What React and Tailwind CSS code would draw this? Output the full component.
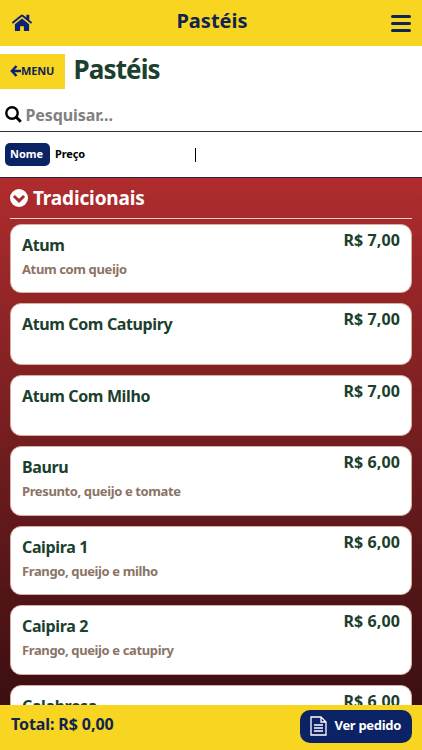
const items = [
  { name: "Atum", description: "Atum com queijo", price: "R$ 7,00" },
  { name: "Atum Com Catupiry", price: "R$ 7,00" },
  { name: "Atum Com Milho", price: "R$ 7,00" },
  { name: "Bauru", description: "Presunto, queijo e tomate", price: "R$ 6,00" },
  { name: "Caipira 1", description: "Frango, queijo e milho", price: "R$ 6,00" },
  { name: "Caipira 2", description: "Frango, queijo e catupiry", price: "R$ 6,00" },
  { name: "Calabresa", price: "R$ 6,00" },
];

function HomeIcon() {
  return (
    <svg width="22" height="18" viewBox="0 0 21 18" fill="#0b2277">
      <path d="M10.5 4.6 3.4 10.300v6.100q0 .7.7.7h4.500v-4.800h3.800v4.800h4.500q.7 0 .7-.7v-6.100z" />
      <path d="M20.700 8.300 17.800 5.900V.8h-2.900v2.700L11.700.9Q10.500 0 9.300.9L.3 8.300l1.200 1.500 9-7.300 9 7.300z" />
    </svg>
  );
}

function ArrowIcon() {
  return (
    <svg width="11" height="12" viewBox="0 0 11 12" fill="none" stroke="#0b2277" strokeWidth="2.500">
      <path d="M6.500 1 1.900 6l4.600 5M2 6h9" />
    </svg>
  );
}

function SearchIcon() {
  return (
    <svg width="17" height="17" viewBox="0 0 17 17" fill="none" stroke="#000" strokeWidth="2.400">
      <circle cx="7" cy="7" r="5.700" />
      <path d="m11 11 4.800 4.800" strokeWidth="2.900" />
    </svg>
  );
}

function ChevronIcon() {
  return (
    <svg width="18" height="18" viewBox="0 0 18 18">
      <circle cx="9" cy="9" r="9" fill="#fff" />
      <path d="m3.900 7 5.100 4.900L14.100 7" fill="none" stroke="#a92b2d" strokeWidth="2.900" />
    </svg>
  );
}

function ItemCard({ item }) {
  return (
    <li
      className={`flex shrink-0 justify-between rounded-[11px] border border-[#d5b0a0] bg-white px-[11px] ${
        item.description ? "h-[69.3px]" : "h-[61.2px]"
      }`}
    >
      <div className="pt-[8px]">
        <h3 className="text-[16px] leading-6 tracking-[-0.37px] text-[#1b402d]">{item.name}</h3>
        {item.description && (
          <p className="text-[13px] leading-6 tracking-[-0.38px] text-[#8b7365]">
            {item.description}
          </p>
        )}
      </div>
      <span className="pt-[3px] text-[16px] leading-6 tracking-[0.1px] text-[#1b402d]">
        {item.price}
      </span>
    </li>
  );
}

export default function App() {
  return (
    <div className="flex h-[750px] w-full flex-col overflow-hidden bg-white font-['Noto_Sans',sans-serif] font-bold">
      <header className="flex h-[46px] shrink-0 items-center justify-between bg-[#f8d521] px-[11px] text-[#0f244f]">
        <HomeIcon />
        <h1 className="pb-[5px] text-[20px] leading-6">Pastéis</h1>
        <div className="flex w-5 flex-col gap-[4px] pt-px">
          <i className="h-[3px] rounded-sm bg-[#0f244f]" />
          <i className="h-[3px] rounded-sm bg-[#0f244f]" />
          <i className="h-[3px] rounded-sm bg-[#0f244f]" />
        </div>
      </header>

      <div className="flex h-[52px] shrink-0 pt-2">
        <button className="flex h-[35px] w-[65px] items-center bg-[#f8d521] pb-px pl-[10px] text-[11px] tracking-[-0.2px] text-[#0f244f]">
          <ArrowIcon />
          MENU
        </button>
        <h2 className="pl-[8.5px] text-[26px] leading-[30px] tracking-[-0.88px] text-[#1b402d]">
          Pastéis
        </h2>
      </div>

      <div className="flex h-[34px] shrink-0 items-center gap-[3.500px] border-b border-[#333] pl-[5px]">
        <SearchIcon />
        <input
          className="w-80 text-[16px] tracking-[-0.1px] outline-none placeholder:text-[#808080]"
          placeholder="Pesquisar..."
        />
      </div>

      <div className="flex h-[46px] shrink-0 items-center border-b border-[#2c2438] pl-[5px] text-[11px] text-black">
        <button className="h-[23px] w-[45px] rounded-[5px] bg-[#0b2265] pr-[2px] pb-px text-white">
          Nome
        </button>
        <button className="ml-[5px] w-[138px] pb-px text-left tracking-[-0.1px]">Preço</button>
        <i className="ml-[2px] h-[14px] w-px bg-black" />
      </div>

      <main className="min-h-0 flex-1 overflow-hidden bg-linear-to-b from-[#b02c2e] to-[#3b0f11] px-[10px]">
        <div className="flex h-[40.5px] items-center gap-[5px] border-b border-[#f0cfcf] pt-px text-white">
          <ChevronIcon />
          <h2 className="text-[19px] leading-6 tracking-[-0.15px]">Tradicionais</h2>
        </div>
        <ul className="mt-[5.5px] flex flex-col gap-[10.2px]">
          {items.map((item) => (
            <ItemCard key={item.name} item={item} />
          ))}
        </ul>
      </main>

      <footer className="flex h-[45px] shrink-0 justify-between bg-[#f8d521] pr-[10px] pl-[11px] pt-[5px]">
        <span className="pt-[2px] text-[16px] leading-6 tracking-[-0.1px] text-[#0f244f]">
          Total: R$ 0,00
        </span>
        <button className="flex h-[33px] w-[112px] items-center gap-2 rounded-[10px] bg-[#0b2265] pb-[2px] pl-[9.5px] text-[13px] tracking-[-0.3px] whitespace-nowrap text-white">
          <svg width="17" height="20" viewBox="0 0 17 20" fill="none" stroke="currentColor" strokeWidth="1.3">
            <path d="M1 1h10l5 5v13H1zM11 1v5h5M4 9h9M4 12h9M4 15h9" />
          </svg>
          Ver pedido
        </button>
      </footer>
    </div>
  );
}
